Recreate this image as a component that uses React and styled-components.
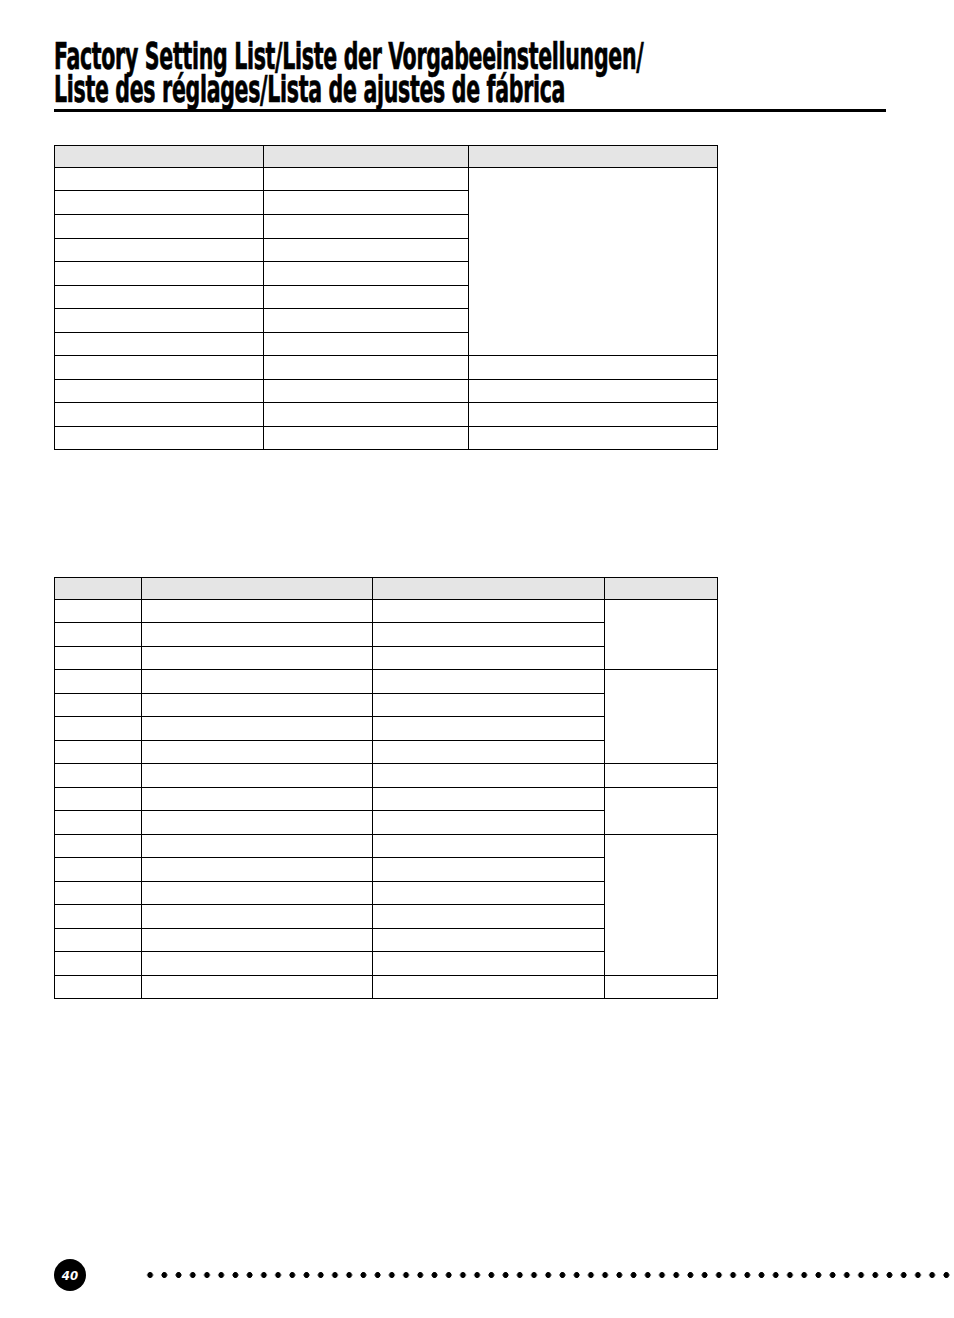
import React from 'react'
import styled, { createGlobalStyle } from 'styled-components'

const GlobalStyle = createGlobalStyle`
    html, body {
        margin:0;
        padding:0;
        background:#fff;
        font-family:"DejaVu Sans", sans-serif;
    }
`

const Page = styled.div`
    width:954px;
    height:1318px;
    box-sizing:border-box;
    padding:40px 0 0 54px;
    display:flex;
    flex-direction:column;
    overflow:hidden;
`
const TitleBox = styled.div`
    height:60px;
    overflow:visible;
`
const Title = styled.h1`
    margin:0;
    font-family:"DejaVu Sans Condensed", "DejaVu Sans", sans-serif;
    font-stretch:condensed;
    font-weight:bold;
    font-size:38px;
    line-height:33px;
    letter-spacing:-0.5px;
    color:#000;
    white-space:nowrap;
    -webkit-text-stroke:0.7px #000;
    transform:scaleX(0.6);
    transform-origin:left top;
`
const Rule = styled.div`
    width:832px;
    height:3px;
    margin-top:9px;
    background:#000;
`
const Table = styled.table`
    border-collapse:collapse;
    table-layout:fixed;
    width:${p => p.width}px;
    margin-top:${p => p.top}px;
    td, th {
        border:1px solid #000;
        padding:0;
    }
    th {
        background:#e5e5e5;
        font-weight:normal;
    }
`
const HeadRow = styled.tr`
    height:22px;
`
const BodyRow = styled.tr`
    height:${p => p.h}px;
`
const Footer = styled.div`
    margin-top:auto;
    margin-bottom:27px;
    display:flex;
    align-items:center;
`
const Badge = styled.div`
    width:32px;
    height:32px;
    border-radius:50%;
    background:#000;
    color:#fff;
    display:flex;
    align-items:center;
    justify-content:center;
    font-family:"DejaVu Sans Condensed", "DejaVu Sans", sans-serif;
    font-weight:bold;
    font-style:italic;
    font-size:13px;
    flex-shrink:0;
`
const Dots = styled.div`
    flex:1;
    height:8px;
    margin-left:57px;
    background-image:radial-gradient(circle, #000 2.6px, transparent 3.2px);
    background-size:14.23px 8px;
    background-repeat:repeat-x;
`

const t1Heights = [23, 24, 24, 23, 24, 23, 24, 23, 24, 23, 24, 23]
const t1Spans = { 0: 8, 8: 1, 9: 1, 10: 1, 11: 1 }

const t2Heights = [23, 24, 23, 24, 23, 24, 23, 24, 23, 24, 23, 24, 23, 24, 23, 24, 23]
const t2Spans = { 0: 3, 3: 4, 7: 1, 8: 2, 10: 6, 16: 1 }

const SettingTable = ({ cols, heights, spans, top }) => {
    const width = cols.reduce((a, b) => a + b, 0)
    return (
        <Table width={width} top={top}>
            <colgroup>
                {cols.map((w, i) => <col key={i} style={{ width: w }} />)}
            </colgroup>
            <thead>
                <HeadRow>
                    {cols.map((_, i) => <th key={i} />)}
                </HeadRow>
            </thead>
            <tbody>
                {heights.map((h, r) => (
                    <BodyRow key={r} h={h}>
                        {cols.slice(0, -1).map((_, c) => <td key={c} />)}
                        {spans[r] ? <td rowSpan={spans[r]} /> : null}
                    </BodyRow>
                ))}
            </tbody>
        </Table>
    )
}

const App = () => {
    return (
        <>
            <GlobalStyle />
            <Page>
                <TitleBox>
                    <Title>
                        Factory Setting List/Liste der Vorgabeeinstellungen/<br />
                        Liste des réglages/Lista de ajustes de fábrica
                    </Title>
                </TitleBox>
                <Rule />
                <SettingTable cols={[209, 205, 249]} heights={t1Heights} spans={t1Spans} top={33} />
                <SettingTable cols={[87, 231, 232, 113]} heights={t2Heights} spans={t2Spans} top={127} />
                <Footer>
                    <Badge>40</Badge>
                    <Dots />
                </Footer>
            </Page>
        </>
    )
}

export default App
